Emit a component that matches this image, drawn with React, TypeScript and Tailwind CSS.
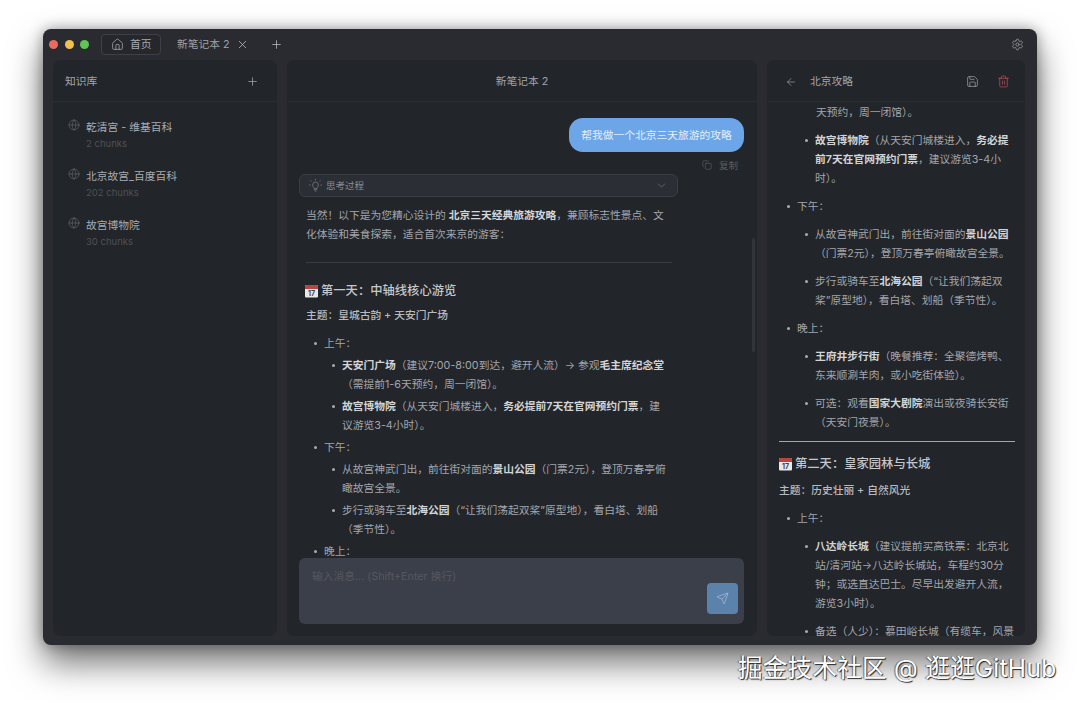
import { ArrowLeft, ChevronDown, Copy, Globe, House, Plus, Save, Send, Settings, Trash2, X } from "lucide-react";
import type { ReactNode } from "react";

const SOURCES = [
  { title: "乾清宫 - 维基百科", chunks: "2 chunks" },
  { title: "北京故宫_百度百科", chunks: "202 chunks" },
  { title: "故宫博物院", chunks: "30 chunks" },
];

function B({ children }: { children: ReactNode }) {
  return <b className="font-semibold text-[#d3d4d6]">{children}</b>;
}

function Item({ children, nested, className }: { children: ReactNode; nested?: boolean; className?: string }) {
  return (
    <div className={`flex ${nested ? "pl-[26px]" : "pl-[8px]"} ${className ?? ""}`}>
      <span className="mt-[8px] mr-[7px] h-[3px] w-[3px] shrink-0 rounded-full bg-[#a9abaf]" />
      <div className="min-w-0 flex-1">{children}</div>
    </div>
  );
}

function Calendar() {
  return (
    <svg width="13" height="14" viewBox="0 0 13 14" className="mr-[3px] shrink-0">
      <rect x="0" y="1" width="13" height="12.5" rx="1" fill="#e8e8ea" />
      <path d="M0 2a1 1 0 0 1 1-1h11a1 1 0 0 1 1 1v3h-13z" fill="#b8453f" />
      <text x="6.5" y="12" textAnchor="middle" fontSize="7" fontWeight="700" fill="#444">17</text>
    </svg>
  );
}

function Bulb() {
  return (
    <svg width="13" height="13" viewBox="0 0 13 13" fill="none" stroke="#77797e" strokeWidth="0.8" strokeLinecap="round" className="mr-[4px] shrink-0">
      <path d="M5 9.2c0-1-1.4-1.5-1.4-3.2a2.9 2.9 0 0 1 5.8 0c0 1.7-1.4 2.2-1.4 3.2z" />
      <path d="M5.3 10.6h2.4M5.8 12h1.4" />
      <path d="M6.5 0.4v0.8M1.7 1.6l.6.6M11.3 1.6l-.6.6M0.3 6h.9M11.8 6h.9" />
    </svg>
  );
}

function DayHeading({ children }: { children: ReactNode }) {
  return (
    <div className="flex items-center text-[12.3px] font-medium text-[#c6c7ca]">
      <Calendar />
      {children}
    </div>
  );
}

function IconBtn({ children }: { children: ReactNode }) {
  return <span className="flex items-center justify-center">{children}</span>;
}

export default function App() {
  return (
    <div className="relative h-[703px] w-[1080px] overflow-hidden bg-white pt-[29px] pl-[43px] font-['Inter','Noto_Sans_CJK_SC',sans-serif] text-[10.75px] leading-[19px] text-[#a4a6aa]">
      <div className="flex h-[616px] w-[994px] flex-col rounded-[8px] bg-[#292b30] shadow-[0_18px_34px_rgba(0,0,0,0.55),0_0_14px_rgba(0,0,0,0.35)]">
        {/* title bar */}
        <div className="flex h-[31px] shrink-0 items-center pl-[6px] pr-[13px]">
          <div className="flex gap-[6.5px]">
            <span className="h-[9px] w-[9px] rounded-full bg-[#ec6a5e]" />
            <span className="h-[9px] w-[9px] rounded-full bg-[#f4bf4f]" />
            <span className="h-[9px] w-[9px] rounded-full bg-[#61c554]" />
          </div>
          <div className="ml-[12px] flex h-[21px] w-[60px] items-center gap-[6px] rounded-[4px] border border-[#3d4046] bg-[#25272c] pl-[9px] text-[#a9abaf]">
            <House size={13} strokeWidth={1.4} />
            <span>首页</span>
          </div>
          <span className="ml-[16px] text-[#a0a2a6]">新笔记本 2</span>
          <X size={13} strokeWidth={1.5} className="ml-[6px] text-[#b5b7ba]" />
          <Plus size={13} strokeWidth={1.5} className="ml-[21px] text-[#b5b7ba]" />
          <Settings size={13} strokeWidth={1.3} className="ml-auto text-[#a9abaf]" />
        </div>

        <div className="flex min-h-0 flex-1 gap-[10px] px-[10px] pb-[9px]">
          {/* knowledge base */}
          <section className="flex w-[224px] shrink-0 flex-col rounded-[8px] bg-[#22252a]">
            <header className="flex h-[42px] shrink-0 items-center justify-between border-b border-[#2b2e33] pl-[12px] pr-[18px] pt-[2px] text-[#a4a6aa]">
              <span>知识库</span>
              <Plus size={13} strokeWidth={1.4} />
            </header>
            <div className="flex flex-col gap-[10px] pl-[15px] pt-[14px]">
              {SOURCES.map((s) => (
                <div key={s.title} className="flex h-[39px] gap-[6px]">
                  <Globe size={12} strokeWidth={1} className="mt-[3px] shrink-0 text-[#77797e]" />
                  <div>
                    <div className="mt-[2px] h-[18px] text-[#a9abaf]">{s.title}</div>
                    <div className="text-[9.5px] leading-[15px] text-[#4e5156]">{s.chunks}</div>
                  </div>
                </div>
              ))}
            </div>
          </section>

          {/* chat */}
          <section className="relative flex w-[470px] shrink-0 flex-col rounded-[8px] bg-[#22252a]">
            <header className="flex h-[42px] shrink-0 items-center justify-center border-b border-[#2b2e33] pt-[2px] text-[#a4a6aa]">
              新笔记本 2
            </header>
            <div className="min-h-0 flex-1 overflow-hidden pt-[16px] pl-[12px] pr-[13px]">
              <div className="flex justify-end">
                <div className="flex h-[34px] w-[175px] items-center justify-center rounded-[14px] bg-[#6ca6e8] text-[#e6eef8]">
                  帮我做一个北京三天旅游的攻略
                </div>
              </div>
              <div className="flex h-[22px] items-center justify-end gap-[7px] pr-[6px] pt-[4px] text-[9.5px] text-[#5a5d62]">
                <Copy size={10} strokeWidth={1.2} className="text-[#6f7277]" />
                <span>复制</span>
              </div>
              <div className="flex h-[23px] w-[379px] items-center rounded-[6px] border border-[#3a3d44] bg-[#2b2e35] pl-[9px] pr-[9px] text-[9.5px] text-[#8b8d92]">
                <Bulb />
                思考过程
                <ChevronDown size={13} strokeWidth={1} className="ml-auto text-[#8b8d92]" />
              </div>
              <div className="ml-[7px] w-[366px] pt-[9px]">
                <p>
                  当然！以下是为您精心设计的 <B>北京三天经典旅游攻略</B>，兼顾标志性景点、文化体验和美食探索，适合首次来京的游客：
                </p>
                <hr className="my-[18px] border-[#3a3c41]" />
                <div className="ml-[-1px]">
                  <DayHeading>第一天：中轴线核心游览</DayHeading>
                </div>
                <p className="mt-[6px] font-medium text-[#b9babd]">主题：皇城古韵 + 天安门广场</p>
                <div className="mt-[9px] flex flex-col gap-[3px] pr-[3px]">
                  <Item>上午：</Item>
                  <Item nested><B>天安门广场</B>（建议7:00-8:00到达，避开人流）→ 参观<B>毛主席纪念堂</B>（需提前1-6天预约，周一闭馆）。</Item>
                  <Item nested><B>故宫博物院</B>（从天安门城楼进入，<B>务必提前7天在官网预约门票</B>，建议游览3-4小时）。</Item>
                  <Item>下午：</Item>
                  <Item nested>从故宫神武门出，前往街对面的<B>景山公园</B>（门票2元），登顶万春亭俯瞰故宫全景。</Item>
                  <Item nested>步行或骑车至<B>北海公园</B>（“让我们荡起双桨”原型地），看白塔、划船（季节性）。</Item>
                  <Item>晚上：</Item>
                  <Item nested><B>王府井步行街</B>（晚餐推荐：全聚德烤鸭、东来顺涮羊肉，或小吃街体验）。</Item>
                </div>
              </div>
            </div>
            <div className="mb-[12px] ml-[12px] mr-[13px] flex h-[66px] shrink-0 rounded-[6px] bg-[#3b3f49] pl-[13px] pr-[6px] pt-[9px]">
              <span className="flex-1 text-[#55585f]">输入消息... (Shift+Enter 换行)</span>
              <div className="mt-[16px] flex h-[31px] w-[31px] items-center justify-center rounded-[4px] bg-[#5b82ab]">
                <Send size={13} strokeWidth={1.1} className="text-[#b4c6da]" />
              </div>
            </div>
            {/* scrollbar thumb */}
            <span className="absolute top-[178px] right-[2px] h-[114px] w-[3px] rounded-full bg-[#31343a]" />
          </section>

          {/* note */}
          <section className="flex w-[258px] shrink-0 flex-col overflow-hidden rounded-[8px] bg-[#22252a]">
            <header className="flex h-[42px] shrink-0 items-center border-b border-[#2b2e33] pl-[18px] pr-[15px] pt-[2px] text-[#a4a6aa]">
              <ArrowLeft size={12} strokeWidth={1.3} className="mr-[13px]" />
              <span>北京攻略</span>
              <span className="ml-auto flex items-center gap-[18px]">
                <IconBtn><Save size={13} strokeWidth={1.3} /></IconBtn>
                <IconBtn><Trash2 size={13} strokeWidth={1.3} className="text-[#c2535e]" /></IconBtn>
              </span>
            </header>
            <div className="min-h-0 flex-1 overflow-hidden pl-[12px] pr-[10px] pt-[1px]">
              <div className="flex flex-col gap-[9px]">
                <div className="pl-[37px]">天预约，周一闭馆）。</div>
                <Item nested><B>故宫博物院</B>（从天安门城楼进入，<B>务必提前7天在官网预约门票</B>，建议游览3-4小时）。</Item>
                <Item>下午：</Item>
                <Item nested>从故宫神武门出，前往街对面的<B>景山公园</B>（门票2元），登顶万春亭俯瞰故宫全景。</Item>
                <Item nested>步行或骑车至<B>北海公园</B>（“让我们荡起双桨”原型地），看白塔、划船（季节性）。</Item>
                <Item>晚上：</Item>
                <Item nested><B>王府井步行街</B>（晚餐推荐：全聚德烤鸭、东来顺涮羊肉，或小吃街体验）。</Item>
                <Item nested>可选：观看<B>国家大剧院</B>演出或夜骑长安街（天安门夜景）。</Item>
              </div>
              <hr className="mt-[9px] mb-[12px] border-[#a4a6aa]" />
              <DayHeading>第二天：皇家园林与长城</DayHeading>
              <p className="mt-[8px] font-medium text-[#b9babd]">主题：历史壮丽 + 自然风光</p>
              <div className="mt-[9px] flex flex-col gap-[9px]">
                <Item>上午：</Item>
                <Item nested><B>八达岭长城</B>（建议提前买高铁票：北京北站/清河站→八达岭长城站，车程约30分钟；或选直达巴士。尽早出发避开人流，游览3小时）。</Item>
                <Item nested>备选（人少）：慕田峪长城（有缆车，风景更佳，游客较少，适合家庭出行）。</Item>
              </div>
            </div>
          </section>
        </div>
      </div>

      {/* watermark */}
      <div className="absolute top-[651px] left-[738px] text-[24.5px] leading-[34px] tracking-[0.3px] whitespace-nowrap text-white [text-shadow:1px_1px_1px_rgba(0,0,0,0.8),-1px_0_1px_rgba(0,0,0,0.5)]">
        掘金技术社区 @ 逛逛GitHub
      </div>
    </div>
  );
}
